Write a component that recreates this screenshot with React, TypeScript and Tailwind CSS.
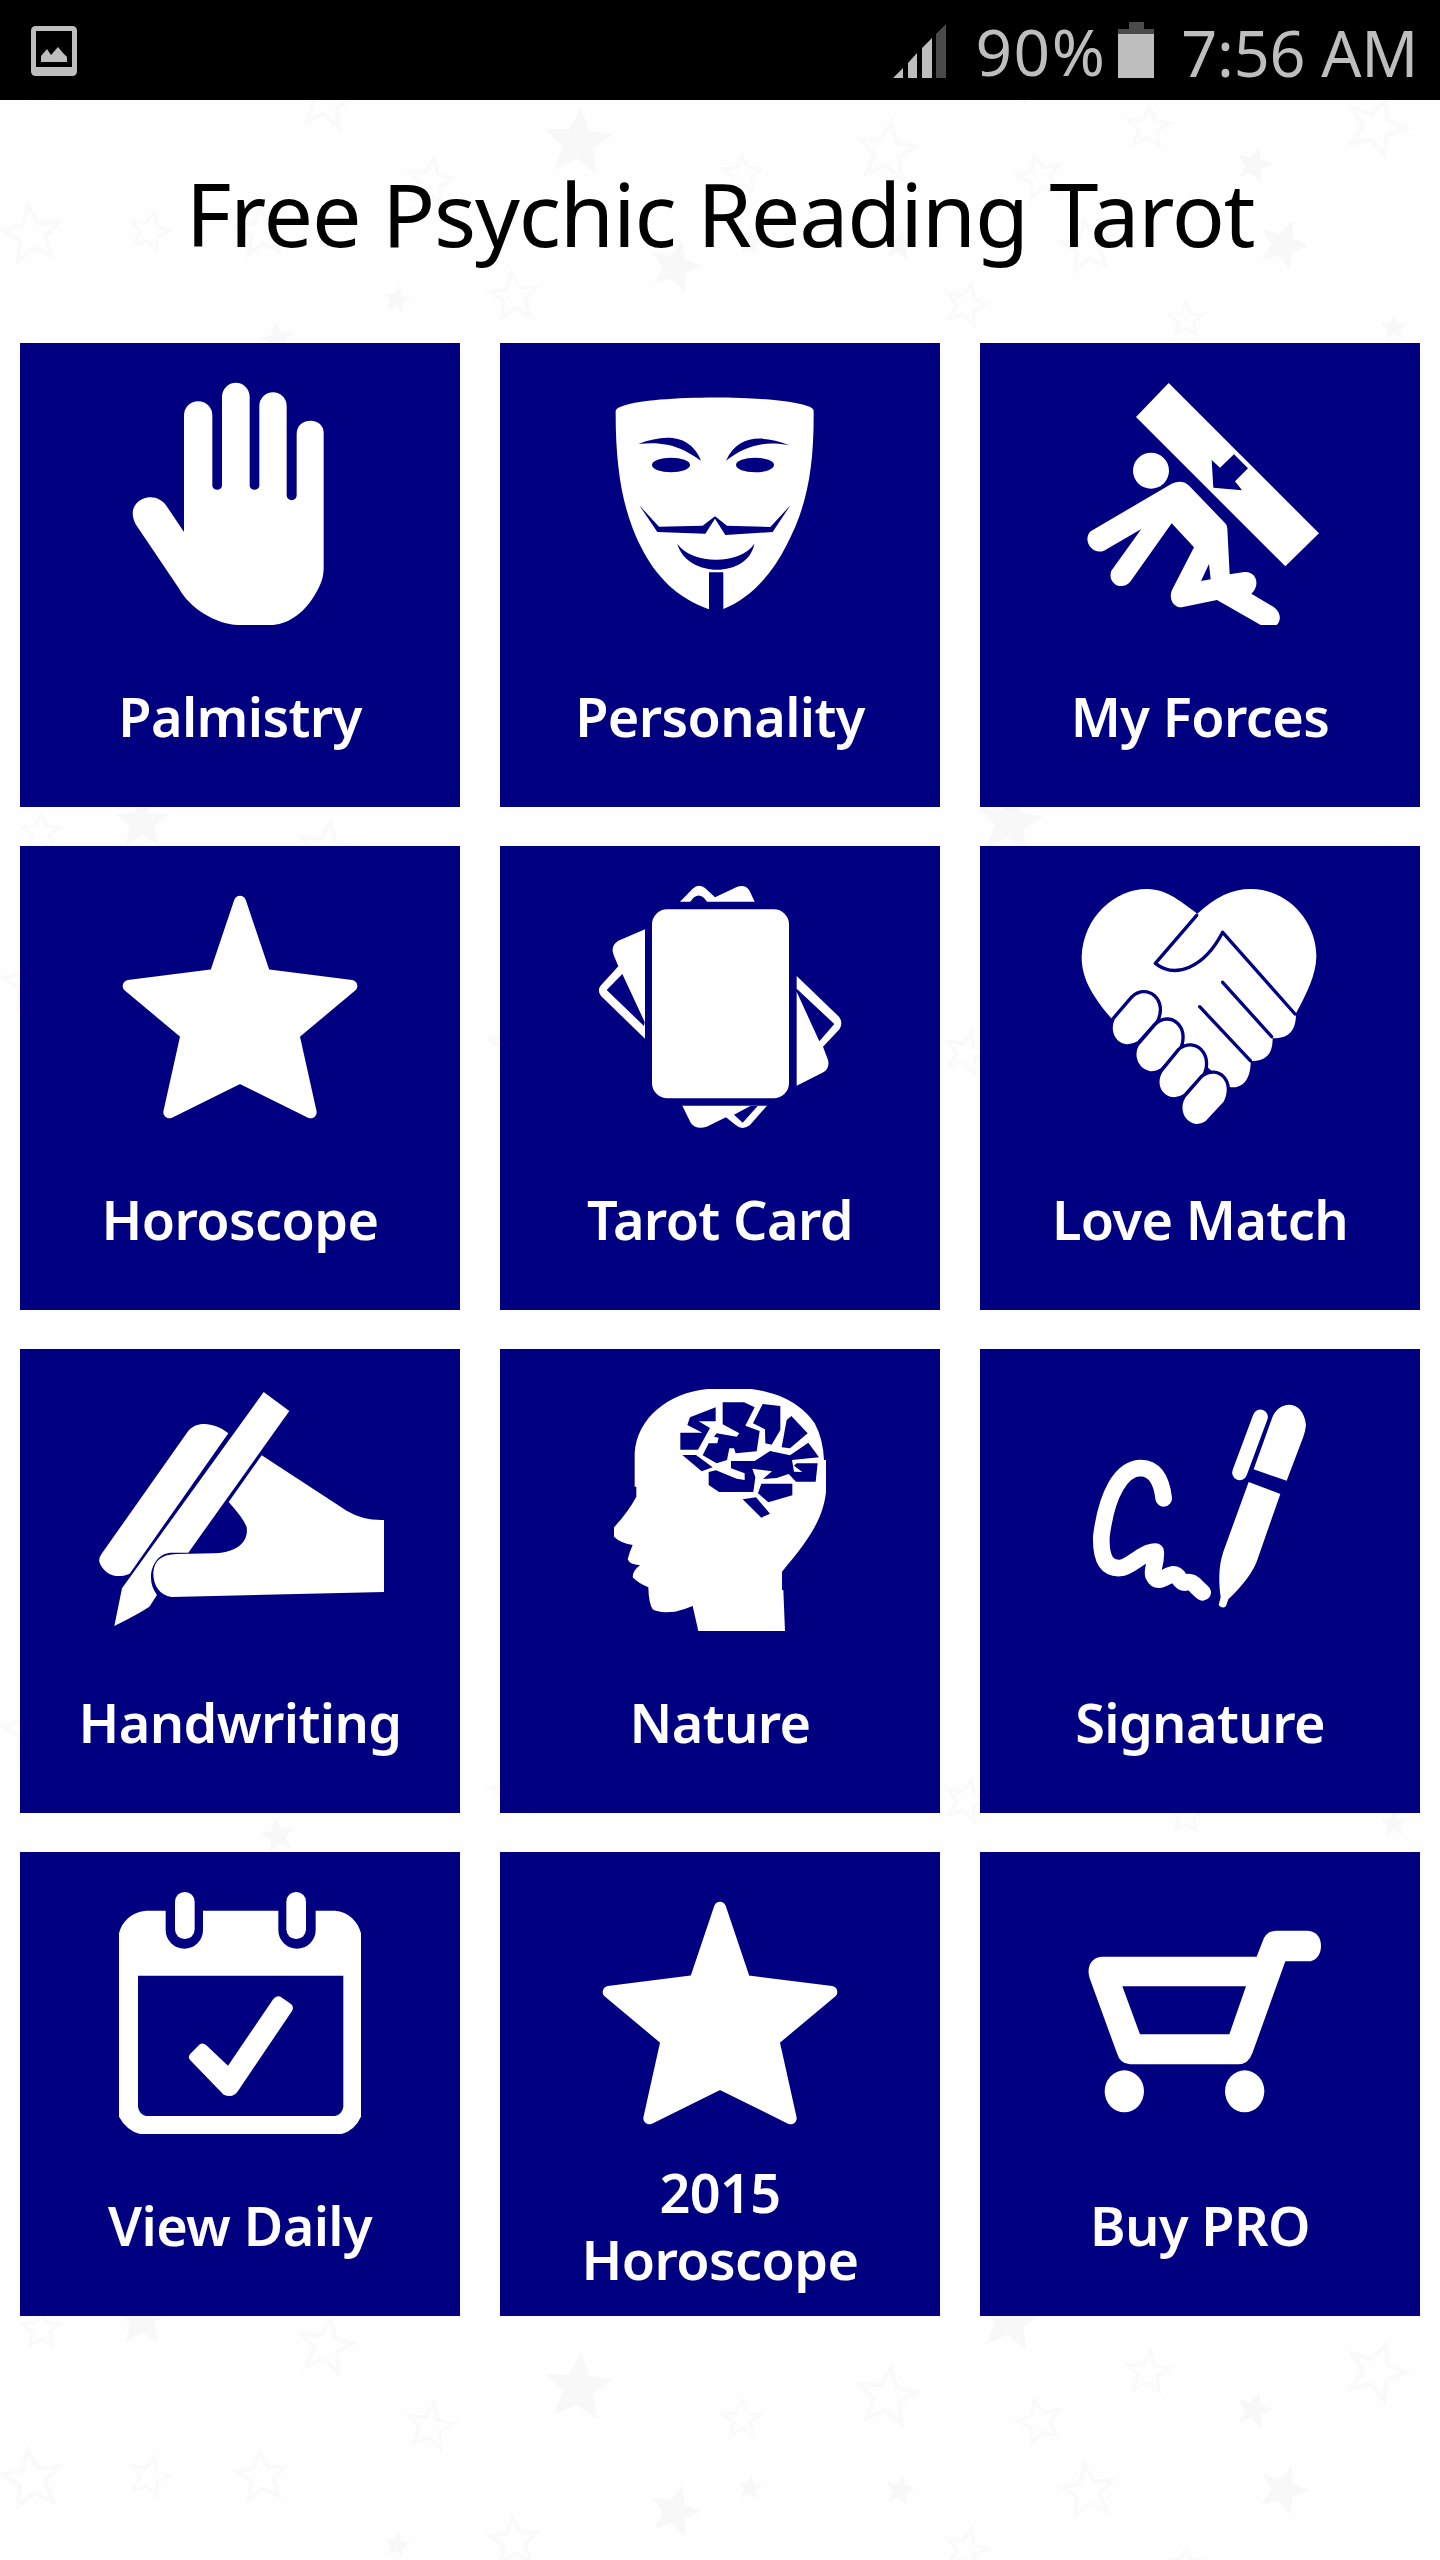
import React from "react";

/* ============================================================
   ICONS
   All of them share a 320x296 slot, drawn at 3 units per pixel
=============================================================== */
const BLUE = "#000080";

type IconProps = { viewBox: string; children: React.ReactNode };

const TileIcon: React.FC<IconProps> = ({ viewBox, children }) => (
  <svg viewBox={viewBox} className="w-[320px] h-[296px] shrink-0" fill="white">
    {children}
  </svg>
);

const HandIcon = () => (
  <TileIcon viewBox="-60 -9 960 888">
    <path d="M252 516V166A42 42 0 0 1 337 166V378A15 15 0 0 0 366 378V110A41 41 0 0 1 449 110V378A15 15 0 0 0 478 378V138A41 41 0 0 1 560 138V406A15 15 0 0 0 590 406V222C590 170 671 170 671 218V625C671 655 660 680 643 707C610 762 560 795 510 795H415C345 792 270 745 236 684L107 493C95 468 95 448 108 432C132 402 180 405 201 440Z" />
  </TileIcon>
);

const MaskIcon = () => (
  <TileIcon viewBox="-60 -9 960 888">
    <path d="M107 152Q110 143 128 138C220 104 590 104 682 138Q701 143 701 154C702 330 680 440 620 555C575 645 510 715 430 747V637H387V748C290 715 225 645 185 565C130 460 106 330 107 152Z" />
    <g fill={BLUE}>
      <path d="M175 252C255 222 330 222 363 302C320 272 270 240 175 252Z" />
      <path d="M628 256C550 225 475 222 438 302C485 265 545 238 628 256Z" />
      <ellipse cx="273" cy="315" rx="57" ry="22" />
      <ellipse cx="525" cy="315" rx="57" ry="22" />
      <path d="M178 436L237 500L368 497L405 469L441 497L571 501L631 436L578 516L436 525L405 476L376 521L232 516Z" />
      <path d="M292 551C335 615 482 615 523 551C505 655 320 655 292 551Z" />
    </g>
  </TileIcon>
);

const ForcesIcon = () => (
  <TileIcon viewBox="-60 -9 960 888">
    <path d="M326 69L777 520L676 619L228 171Z" />
    <path fill={BLUE} d="M522 283L564 325L525 364L546 391L460 383L455 300L480 323Z" />
    <circle cx="273" cy="332" r="54" />
    <path
      fillRule="evenodd"
      d="M335 371Q365 358 386 376L497 491Q502 497 502 506L509 643L553 636C588 632 603 675 574 701L640 740C664 757 664 782 650 795H602L471 720L365 742C340 743 325 715 336 690L402 562L335 490L214 661C188 698 140 670 154 632L244 507L132 572C96 586 66 540 92 514ZM447 612L423 663L452 658Z"
    />
  </TileIcon>
);

const StarIcon = () => (
  <TileIcon viewBox="0 0 960 888">
    <path
      stroke="white"
      strokeWidth="36"
      strokeLinejoin="round"
      d="M480 125L554 345L814 378L640 523L692 757L480 652L268 757L320 523L146 378L406 345Z"
    />
  </TileIcon>
);

const CardsIcon = () => (
  <TileIcon viewBox="-60 0 960 888">
    <rect x="216" y="148" width="411" height="567" rx="46" />
    <path d="M300 125L338 86Q355 70 375 84L405 112L472 80Q497 72 509 93L524 125H381Q356 88 331 125Z" />
    <path d="M195 208V536L63 408Q50 391 63 376L115 319L101 285Q90 258 115 242ZM127 342L80 390L192 498L194 486Z" fillRule="evenodd" />
    <path d="M650 348L777 470Q790 487 779 507L729 560L744 600Q750 625 730 637L650 677ZM650 395L718 544L763 492L650 386Z" fillRule="evenodd" />
    <path d="M307 737H561L510 795Q488 812 468 796L438 772L380 800Q347 810 332 788ZM511 738L462 764L488 788L533 738Z" fillRule="evenodd" />
  </TileIcon>
);

const LoveIcon = () => (
  <TileIcon viewBox="-60 0 960 888">
    <path d="M154 475C90 400 65 350 65 290C70 170 165 86 263 87C320 90 350 115 412 161C470 108 520 86 575 87C690 90 770 190 769 290C768 345 740 400 708 460C708 510 690 535 638 535C638 580 620 605 572 603C573 660 545 690 505 680L420 600L300 480Z" />
    <g stroke={BLUE} strokeWidth="10" strokeLinejoin="round">
      <path fill="none" strokeLinecap="round" d="M410 166L286 310C345 357 432 325 488 217L705 462M488 367L635 530M419 440L571 602" />
      <path d="M216 410C262 368 325 420 292 485L236 547C185 580 135 530 160 475Z" />
      <path d="M285 493C330 450 392 500 361 567L304 630C255 660 205 605 232 555Z" />
      <path d="M356 568C405 528 462 585 431 645L374 706C325 740 270 685 304 632Z" />
      <path d="M424 650C475 610 528 665 495 728L440 787C395 820 340 765 372 710Z" />
    </g>
  </TileIcon>
);

const HandwritingIcon = () => (
  <TileIcon viewBox="0 -21 960 888">
    <path d="M551 66L628 123L325 548H270C215 555 195 630 231 675L208 710Q175 732 103 768L126 655Z" />
    <path d="M445 190L149 611C110 630 68 610 58 575Q56 563 66 550L323 185C350 150 405 158 445 190Z" />
    <path d="M545 256L800 422Q850 452 912 450V666L275 681C238 676 219 645 220 608C222 572 245 553 290 552L405 550C480 545 505 510 500 472Q493 448 446 396Z" />
  </TileIcon>
);

const NatureIcon = () => (
  <TileIcon viewBox="-90 -21 960 888">
    <path d="M352 57H484C580 70 640 110 674 160Q699 205 702 270H708V365C700 440 665 500 576 605V660H580L585 783H325L308 708Q280 720 255 725Q205 730 188 718Q176 700 175 652Q145 640 128 622Q128 602 150 586Q119 584 113 568Q118 547 128 525Q90 518 72 500V472Q115 425 139 380V350H134V250C140 145 235 68 352 57Z" />
    <g fill={BLUE}>
      <path d="M377 112V154H326L360 174L324 239H271V188H337L292 165L300 142Z" />
      <path d="M398 97H462L494 112L466 167L509 183L500 244L437 250L432 235H418L411 270L380 280L338 256L356 220H382L386 203L372 200L380 190L440 200L448 190L398 163Z" />
      <path d="M518 102L571 108V180L545 224L526 220L525 178L489 160Z" />
      <path d="M604 138L653 190L600 235L575 232L590 150Z" />
      <path d="M655 218L687 262L606 270L612 305L637 306L612 287L620 280H683L677 335H618L596 312L560 324L519 327L546 304L487 296L496 322L490 366H387L356 345V306L378 301L440 326L464 330V310L423 295V273H494L540 243L600 256Z" />
      <path d="M277 255H318L368 292L335 304Z" />
      <path d="M514 341H607V376L535 397L504 370Z" />
      <path d="M458 388L498 382L540 431L514 443Z" />
    </g>
  </TileIcon>
);

const SignatureIcon = () => (
  <TileIcon viewBox="-90 -51 960 888">
    <path
      fill="none"
      stroke="white"
      strokeWidth="50"
      strokeLinecap="round"
      strokeLinejoin="round"
      d="M281 355C275 300 255 266 213 264C155 264 110 340 94 470C92 545 115 566 150 564C185 562 215 515 257 515C260 550 245 565 250 585C265 618 290 583 310 583C330 583 325 608 345 608C370 600 375 620 398 637"
    />
    <path d="M606 115C625 60 700 55 708 135Q706 155 700 170L650 302L551 268Z" />
    <path fill="none" stroke="white" strokeWidth="45" strokeLinecap="round" d="M571 111L509 278" />
    <path d="M536 306L631 342L560 545Q540 595 475 658L468 678Q458 689 446 675L452 652C444 595 448 550 460 515Z" />
  </TileIcon>
);

const CalendarIcon = () => (
  <TileIcon viewBox="-60 -12 960 888">
    <path
      fillRule="evenodd"
      d="M140 122H197V180A56 56 0 0 0 309 180V122H535V180A56 56 0 0 0 647 180V122H705C745 125 775 155 783 190V740Q765 780 725 792H120Q80 782 57 740V190C65 155 95 125 140 122ZM114 317V710Q117 732 138 738H705Q727 732 730 710V317Z"
    />
    <rect x="225" y="66" width="59" height="141" rx="29" />
    <rect x="559" y="66" width="59" height="141" rx="29" />
    <path d="M298 524Q308 516 319 526L384 587L520 387Q532 373 546 383L573 402Q583 411 576 423L416 660Q400 687 371 674L271 571Q262 561 271 551Z" />
  </TileIcon>
);

const CartIcon = () => (
  <TileIcon viewBox="-60 -102 960 888">
    <path
      fillRule="evenodd"
      d="M125 170H590L608 124Q618 93 648 92H743C770 94 783 112 783 137C783 165 768 184 743 184H676L577 460Q565 493 535 493H210Q180 492 171 460L89 235C78 200 95 172 125 170ZM187 259L240 403H508L558 259Z"
    />
    <ellipse cx="193" cy="574" rx="59" ry="63" />
    <ellipse cx="554" cy="574" rx="59" ry="63" />
  </TileIcon>
);

const tiles = [
  { label: "Palmistry", Icon: HandIcon },
  { label: "Personality", Icon: MaskIcon },
  { label: "My Forces", Icon: ForcesIcon },
  { label: "Horoscope", Icon: StarIcon },
  { label: "Tarot Card", Icon: CardsIcon },
  { label: "Love Match", Icon: LoveIcon },
  { label: "Handwriting", Icon: HandwritingIcon },
  { label: "Nature", Icon: NatureIcon },
  { label: "Signature", Icon: SignatureIcon },
  { label: "View Daily", Icon: CalendarIcon },
  { label: "2015 Horoscope", Icon: StarIcon },
  { label: "Buy PRO", Icon: CartIcon },
];

/* ============================================================
   STAR BACKDROP
   [x, y, radius, rotation, solid]
=============================================================== */
const stars: [number, number, number, number, boolean][] = [
  [142, 75, 28, 0, true],
  [1010, 75, 34, 8, true],
  [41, 85, 20, 0, false],
  [326, 102, 28, 10, false],
  [578, 143, 36, 5, true],
  [430, 182, 24, 10, false],
  [742, 175, 20, 0, false],
  [887, 152, 30, 8, false],
  [1040, 177, 23, -15, false],
  [1148, 128, 22, 5, false],
  [1376, 127, 30, 20, false],
  [1254, 165, 19, 15, true],
  [32, 235, 30, -8, false],
  [149, 232, 21, 15, false],
  [262, 232, 26, -5, false],
  [750, 243, 13, 5, true],
  [900, 245, 16, 10, true],
  [1088, 247, 27, -8, false],
  [1283, 245, 26, 20, true],
  [675, 267, 27, 15, true],
  [397, 300, 14, 10, true],
  [514, 297, 25, -5, false],
  [966, 305, 22, 15, false],
  [1186, 320, 18, 0, false],
  [1394, 328, 14, 0, true],
  [278, 340, 18, -10, true],
];

const StarBackdrop = () => (
  <svg viewBox="0 0 1440 2560" className="absolute inset-0 w-full h-full">
    {[0, 748, 1496, 2245].map((top) => (
      <g key={top} transform={`translate(0 ${top})`}>
        {stars.map(([x, y, r, rot, solid]) => (
          <path
            key={`${x}-${y}`}
            transform={`translate(${x} ${y}) rotate(${rot}) scale(${r / 100})`}
            fill={solid ? "#f8f8f8" : "none"}
            stroke={solid ? "none" : "#fafafa"}
            strokeWidth="14"
            d="M0-100L27-35L95-31L42 12L59 81L0 44L-59 81L-42 12L-95-31L-27-35Z"
          />
        ))}
      </g>
    ))}
  </svg>
);

/* ============================================================
   STATUS BAR
=============================================================== */
const StatusBar = () => (
  <header className="relative flex h-[100px] items-center justify-between bg-black pl-[31px] pr-[22px] text-[#bebebe]">
    <svg viewBox="0 0 46 50" className="mt-[2px] w-[46px] h-[50px]" fill="currentColor">
      <path fillRule="evenodd" d="M5 0H41Q46 0 46 5V45Q46 50 41 50H5Q0 50 0 45V5Q0 0 5 0ZM5 5V41H41V5Z" />
      <path d="M10 36V30L16 23L20 29L27 21L32 27L36 31V36Z" />
    </svg>
    <div className="flex items-center">
      <svg viewBox="0 0 53 54" className="mt-[2px] w-[53px] h-[54px]" fill="currentColor">
        <path d="M0 54L10 44V54ZM15 39L24 29V54H15ZM29 24L39 14V54H29Z" />
        <path fill="#4a4a4a" d="M43 10L53 0V54H43Z" />
      </svg>
      <span className="ml-[29px] pt-[4px] text-[64px] leading-none tracking-[1.5px]">90%</span>
      <svg viewBox="0 0 36 56" className="ml-[12px] w-[36px] h-[56px]" fill="currentColor">
        <path fill="#4a4a4a" d="M11 0H26V7H36V12H0V7H11Z" />
        <path d="M0 12H36V56H0Z" />
      </svg>
      <span className="ml-[27px] pt-[4px] text-[63px] leading-none tracking-[-0.3px]">7:56 AM</span>
    </div>
  </header>
);

/* ============================================================
   UI
=============================================================== */
export default function App() {
  return (
    <div className="relative h-[2560px] w-[1440px] overflow-hidden bg-[#fefefe] font-['Noto_Sans',sans-serif]">
      <StarBackdrop />
      <StatusBar />

      <h1 className="relative flex h-[243px] items-center justify-center pb-[18px] text-[88px] leading-none tracking-[-1.2px] whitespace-nowrap text-black">
        Free Psychic Reading Tarot
      </h1>

      <main className="relative grid grid-cols-3 gap-x-10 gap-y-[39px] px-5">
        {tiles.map(({ label, Icon }) => (
          <button
            key={label}
            className="flex h-[464px] flex-col items-center bg-[#000080] pt-[14px] text-white"
          >
            <Icon />
            <span className="flex h-[127px] w-[320px] items-center justify-center text-center text-[54px] leading-[67px] font-[560] tracking-[-0.6px]">
              {label}
            </span>
          </button>
        ))}
      </main>
    </div>
  );
}
